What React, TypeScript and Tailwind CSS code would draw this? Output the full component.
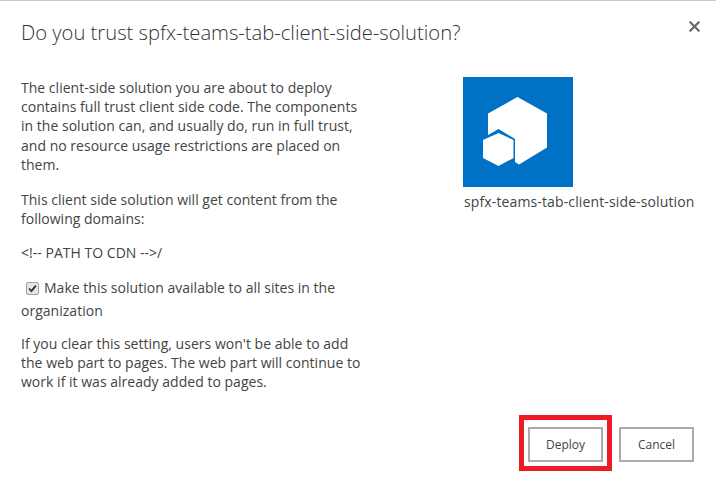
import { X } from 'lucide-react';

function SolutionLogo() {
  return (
    <div className="w-[110px] h-[110px] bg-[#0072c6]">
      <svg viewBox="0 0 110 110" className="w-full h-full">
        <path d="M54.5 20 L84 36.5 L84 70.5 L56 87.5 L52 85 L52 62 L35.5 52 L25 58 L25 36.5 Z" fill="#fff" />
        <path d="M35.5 56 L50.5 63 L50.5 81 L35.5 89 L20 81 L20 63 Z" fill="#fff" />
      </svg>
    </div>
  );
}

function CheckedBox() {
  return (
    <span className="inline-flex items-center justify-center w-[13px] h-[13px] ml-[5px] mr-[5px] align-[-2px] rounded-[2px] border border-[#a0a0a0] bg-[#e6e6e6]">
      <svg viewBox="0 0 13 13" className="w-[13px] h-[13px]">
        <path d="M2.5 6.5 L5.2 9.5 L10.5 3" fill="none" stroke="#333333" strokeWidth="2.2" />
      </svg>
    </span>
  );
}

export default function App() {
  return (
    <div className="w-[716px] h-[494px] bg-white text-[#444444] border-t border-[#c8c8c8] overflow-hidden font-['Open_Sans',sans-serif]">
      <div className="flex items-start justify-between pl-[21px] pr-[13px] pt-[17px]">
        <h1 className="text-[20.2px] leading-[28px] font-light text-[#333333]">
          Do you trust spfx-teams-tab-client-side-solution?
        </h1>
        <X size={17} strokeWidth={3} className="text-[#666666]" />
      </div>

      <div className="flex pl-[21px] pt-[31px]">
        <div className="w-[345px] text-[14px] leading-[19.2px] tracking-[0.02px] pt-[1px]">
          <p className="mb-[16px]">
            The client-side solution you are about to deploy contains full trust client side code. The components in the
            solution can, and usually do, run in full trust, and no resource usage restrictions are placed on them.
          </p>
          <p className="mb-[15px]">This client side solution will get content from the following domains:</p>
          <p className="mb-[13px]">{'<!-- PATH TO CDN -->/'}</p>
          <p className="mb-[12px] leading-[23px]">
            <CheckedBox />
            Make this solution available to all sites in the organization
          </p>
          <p>
            If you clear this setting, users won't be able to add the web part to pages. The web part will continue to
            work if it was already added to pages.
          </p>
        </div>
        <div className="ml-[97px] flex flex-col items-start">
          <SolutionLogo />
          <div className="mt-[5px] ml-[1px] text-[14px] leading-[19px] tracking-[0.13px] whitespace-nowrap">
            spfx-teams-tab-client-side-solution
          </div>
        </div>
      </div>

      <div className="flex justify-end items-start pr-[22px] mt-[24px]">
        <div className="border-[5px] border-[#ed1c24] pt-[7px] pb-[4px] px-[4px] mr-[7px]">
          <button className="block w-[75px] h-[35px] border-2 border-[#ababab] bg-white text-[12px] text-[#444444]">
            Deploy
          </button>
        </div>
        <button className="block w-[75px] h-[35px] mt-[12px] border-2 border-[#ababab] bg-white text-[12px] text-[#444444]">
          Cancel
        </button>
      </div>
    </div>
  );
}
